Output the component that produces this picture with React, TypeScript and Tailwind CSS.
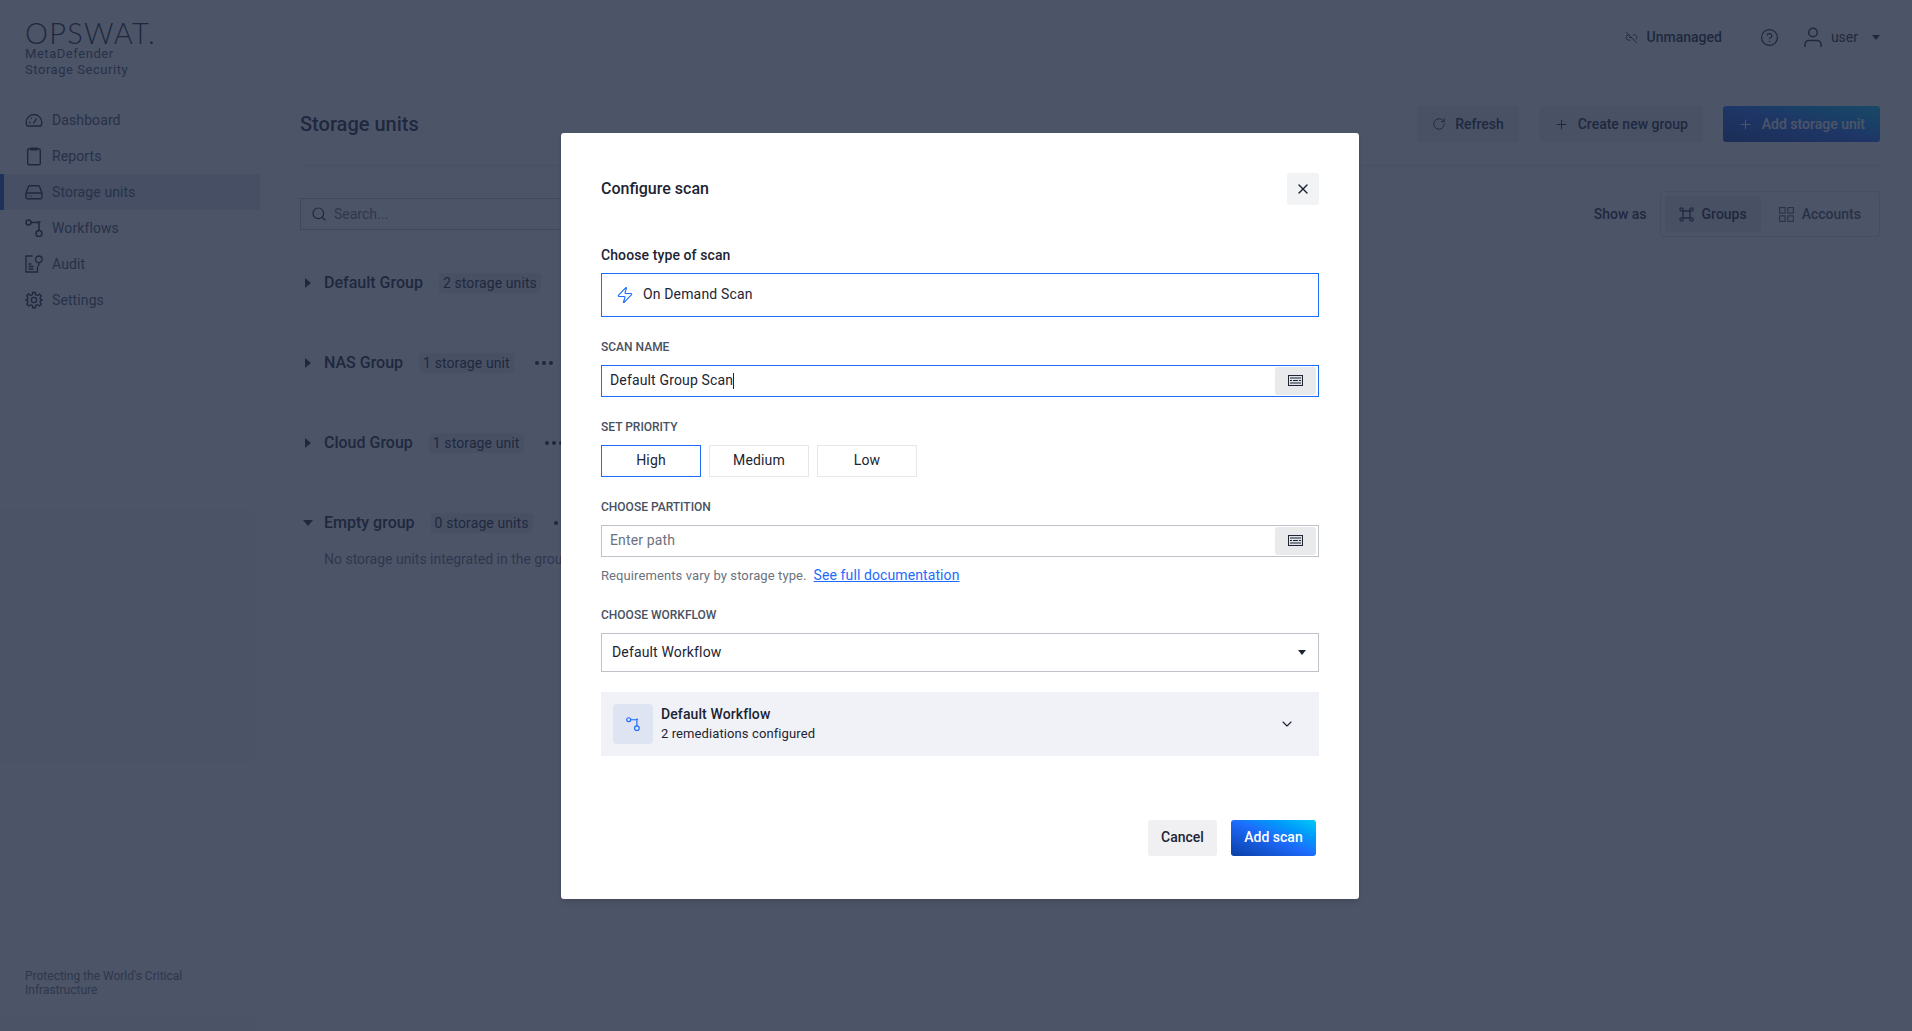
import { ChevronDown, CircleHelp, Link2Off, Plus, RotateCw, Search, X, Zap } from "lucide-react";

const navItems = [
  { label: "Dashboard", icon: <DashIcon /> },
  { label: "Reports", icon: <ReportIcon /> },
  { label: "Storage units", icon: <StorageIcon />, active: true },
  { label: "Workflows", icon: <WorkflowIcon size={18} /> },
  { label: "Audit", icon: <AuditIcon /> },
  { label: "Settings", icon: <GearIcon /> },
];

const groups = [
  { name: "Default Group", count: "2 storage units" },
  { name: "NAS Group", count: "1 storage unit" },
  { name: "Cloud Group", count: "1 storage unit" },
  { name: "Empty group", count: "0 storage units", open: true },
];

function DashIcon() {
  return (
    <svg width="18" height="18" viewBox="0 0 18 18" fill="none" stroke="currentColor" strokeWidth="1.4">
      <path d="M2.2 15h13.6c.6-1 1-2.4 1-3.6C16.800 7.200 13.300 3.500 9 3.500S1.200 7.200 1.200 11.400c0 1.200.4 2.600 1 3.600Z" />
      <path d="M8.500 12.500 11.500 7.500M4 11.500h1.500M6 7l.8.8" />
    </svg>
  );
}

function ReportIcon() {
  return (
    <svg width="18" height="20" viewBox="0 0 18 20" fill="none" stroke="currentColor" strokeWidth="1.4">
      <rect x="2.700" y="2.700" width="12.600" height="16" rx="1.500" />
      <path d="M6 2.200h6V3.800H6z" fill="currentColor" />
    </svg>
  );
}

function StorageIcon() {
  return (
    <svg width="18" height="18" viewBox="0 0 18 18" fill="none" stroke="currentColor" strokeWidth="1.4">
      <path d="M1 10 3.500 3.500c.2-.5.6-.8 1.200-.8h8.600c.6 0 1 .3 1.200.8L17 10v4.300c0 .8-.6 1.400-1.400 1.400H2.400c-.8 0-1.400-.6-1.400-1.400V10Z" />
      <path d="M1 10h16M3.800 13h.6M6 13h.6" />
    </svg>
  );
}

function WorkflowIcon({ size }: { size: number }) {
  return (
    <svg width={size} height={size} viewBox="0 0 18 18" fill="none" stroke="currentColor" strokeWidth="1.5">
      <circle cx="3.500" cy="3.500" r="2.500" />
      <circle cx="14" cy="14.500" r="3" />
      <path d="M6 3.500h8v8" />
      <path d="M12.500 3h3" />
    </svg>
  );
}

function AuditIcon() {
  return (
    <svg width="18" height="18" viewBox="0 0 18 18" fill="none" stroke="currentColor" strokeWidth="1.3">
      <path d="M7.500 1H1v16h11.500v-6" />
      <circle cx="13.800" cy="4.300" r="3.300" />
      <path d="M13.800 7.600V11M3.500 9h3M3.500 11.500h5M3.500 14h5" />
    </svg>
  );
}

function GearIcon() {
  return (
    <svg width="18" height="18" viewBox="0 0 24 24" fill="none" stroke="currentColor" strokeWidth="1.8">
      <path d="M10.300 2h3.400l.6 3 2.400 1 2.600-1.700 2.400 2.400L20 9.300l1 2.400 3 .3v0l-3 .6-1 2.400 1.700 2.600-2.400 2.400-2.600-1.700-2.400 1-.6 3h-3.400l-.6-3-2.400-1-2.600 1.700-2.400-2.400L4 14.700l-1-2.400-3-.3 3-.6 1-2.400-1.700-2.600 2.400-2.400L7.300 6l2.400-1 .6-3Z" />
      <circle cx="12" cy="12" r="3.500" />
    </svg>
  );
}

function KeyboardIcon() {
  return (
    <svg width="15" height="11" viewBox="0 0 15 11" fill="none">
      <rect x="0.500" y="0.500" width="14" height="10" stroke="#1d2433" fill="#dfe1e6" />
      <path d="M2 3h11M2 5.500h2M5 5.500h5M11 5.500h2M2 8h11" stroke="#1d2433" />
    </svg>
  );
}

function Caret() {
  return <span className="w-0 h-0 border-x-[4px] border-x-transparent border-t-[5px] border-t-[#1d2433]" />;
}

function FieldLabel({ children, className }: { children: React.ReactNode; className: string }) {
  return <p className={`text-[12px] leading-[14px] font-medium text-[#485162] ${className}`}>{children}</p>;
}

function TextField({ value, placeholder, focused }: { value?: string; placeholder?: string; focused?: boolean }) {
  return (
    <div className={`h-[32px] flex items-center justify-between border pl-[8px] pr-[2px] ${focused ? "border-[#1d6bfc]" : "border-[#bfc2c8]"}`}>
      {value ? (
        <span className="text-[14px] tracking-[0.15px] text-[#1d2433] flex items-center">
          {value}
          <span className="w-px h-[16px] bg-[#1d2433]" />
        </span>
      ) : (
        <span className="text-[14px] tracking-[0.15px] text-[#6b7280]">{placeholder}</span>
      )}
      <button className="w-[41px] h-[28px] rounded-[3px] bg-[#e9eaec] flex items-center justify-center">
        <KeyboardIcon />
      </button>
    </div>
  );
}

function PriorityButton({ label, active }: { label: string; active?: boolean }) {
  return (
    <button className={`w-[100px] h-[32px] text-[14px] tracking-[0.15px] text-[#1d2433] border ${active ? "border-[#1d6bfc]" : "border-[#e6e7ea]"}`}>
      {label}
    </button>
  );
}

function ActionButton({ icon, label, primary }: { icon: React.ReactNode; label: string; primary?: boolean }) {
  return (
    <button
      className={`h-[36px] px-[15px] rounded-[3px] flex items-center gap-[9px] text-[14px] font-medium ${
        primary
          ? "bg-gradient-to-tr from-[#0a3fa5] via-[#1d6bfc] to-[#00c8f5] text-white"
          : "bg-[#eef0f4] text-[#1d2433]"
      }`}
    >
      {icon}
      {label}
    </button>
  );
}

export default function App() {
  return (
    <div className="relative h-screen w-full flex overflow-hidden bg-white font-['Roboto',sans-serif] text-[#1d2433]">
      <aside className="w-[260px] shrink-0 flex flex-col bg-[#fcfcfc]">
        <div className="pl-[25px] pt-[17px]">
          <div className="font-['Lato',sans-serif] font-light text-[29px] leading-[32px] tracking-[1.3px] text-[#1d2433]">OPSWAT.</div>
          <div className="mt-[-3px] text-[13px] leading-[16px] tracking-[0.55px] text-[#485162]">
            MetaDefender
            <br />
            Storage Security
          </div>
        </div>
        <nav className="mt-[24px] flex flex-col">
          {navItems.map((item) => (
            <div
              key={item.label}
              className={`h-[36px] flex items-center gap-[9px] text-[14px] tracking-[0.1px] ${
                item.active ? "bg-[#dfe6ef] border-l-[4px] border-[#1d4fb5] pl-[21px]" : "pl-[25px]"
              }`}
            >
              <span className="w-[18px] flex justify-center text-[#1d2433]">{item.icon}</span>
              <span className="text-[#485162]">{item.label}</span>
            </div>
          ))}
        </nav>
        <p className="mt-auto mb-[34px] pl-[25px] text-[12px] leading-[14px] text-[#6b7280]">
          Protecting the World's Critical
          <br />
          Infrastructure
        </p>
      </aside>

      <main className="flex-1 pl-[40px] pr-[32px] flex flex-col">
        <div className="h-[74px] flex items-center justify-end text-[14px] font-medium">
          <Link2Off size={13} strokeWidth={1.6} />
          <span className="ml-[9px] text-[#1d2433]">Unmanaged</span>
          <CircleHelp size={19} strokeWidth={1.6} className="ml-[38px]" />
          <svg className="ml-[25px]" width="18" height="21" viewBox="0 0 18 21" fill="none" stroke="currentColor" strokeWidth="1.5">
            <circle cx="9" cy="5.500" r="4.300" />
            <path d="M1 20v-2.500C1 15 3 13.500 5 13.500h8c2 0 4 1.500 4 4V20" />
          </svg>
          <span className="ml-[9px] font-normal mr-[14px]">user</span>
          <Caret />
        </div>

        <div className="pt-[32px] pb-[23px] flex items-center justify-between border-b border-[#e8eaee]">
          <h1 className="text-[20px] font-medium">Storage units</h1>
          <div className="flex gap-[20px]">
            <ActionButton icon={<RotateCw size={14} strokeWidth={1.6} />} label="Refresh" />
            <ActionButton icon={<Plus size={15} strokeWidth={1.6} />} label="Create new group" />
            <ActionButton primary icon={<Plus size={15} strokeWidth={1.6} />} label="Add storage unit" />
          </div>
        </div>

        <div className="mt-[25px] h-[46px] flex items-center justify-between">
          <div className="w-[400px] h-[32px] flex items-center gap-[7px] border border-[#bfc2c8] pl-[10px] text-[14px] text-[#6b7280]">
            <Search size={16} strokeWidth={1.8} className="text-[#1d2433]" />
            Search...
          </div>
          <div className="flex items-center gap-[13px]">
            <span className="text-[14px] font-medium">Show as</span>
            <div className="h-[46px] flex items-center p-[4px] rounded-[3px] border border-[#dfe1e6] text-[14px] font-medium">
              <div className="h-[36px] px-[14px] flex items-center gap-[8px] rounded-[3px] bg-[#e9ecf1]">
                <svg width="15" height="15" viewBox="0 0 15 15" fill="none" stroke="currentColor" strokeWidth="1.3">
                  <circle cx="2.500" cy="2.500" r="1.600" />
                  <circle cx="12.500" cy="2.500" r="1.600" />
                  <circle cx="2.500" cy="12.500" r="1.600" />
                  <circle cx="12.500" cy="12.500" r="1.600" />
                  <rect x="4" y="4" width="7" height="7" rx="1" />
                </svg>
                Groups
              </div>
              <div className="h-[36px] pl-[18px] pr-[14px] flex items-center gap-[8px] text-[#485162]">
                <svg width="15" height="15" viewBox="0 0 15 15" fill="none" stroke="currentColor" strokeWidth="1.1">
                  <rect x="0.600" y="0.600" width="5.500" height="5.500" />
                  <rect x="8.900" y="0.600" width="5.500" height="5.500" />
                  <rect x="0.600" y="8.900" width="5.500" height="5.500" />
                  <rect x="8.900" y="8.900" width="5.500" height="5.500" />
                </svg>
                Accounts
              </div>
            </div>
          </div>
        </div>

        <div className="mt-[26px] flex flex-col gap-[40px]">
          {groups.map((group) => (
            <div key={group.name} className="h-[40px] relative">
              <div className="h-[40px] flex items-center">
                <span className="w-[24px] flex">
                  {group.open ? (
                    <span className="ml-[3px] w-0 h-0 border-x-[5px] border-x-transparent border-t-[6px] border-t-[#1d2433]" />
                  ) : (
                    <span className="ml-[5px] w-0 h-0 border-y-[5px] border-y-transparent border-l-[6px] border-l-[#1d2433]" />
                  )}
                </span>
                <span className="text-[16px] font-medium">{group.name}</span>
                <span className="ml-[16px] h-[20px] px-[4px] rounded-[3px] bg-[#e9ecf1] text-[14px] leading-[20px] tracking-[0.1px]">{group.count}</span>
                <span className="ml-[21px] text-[18px] font-bold tracking-[1px] flex gap-[3px]">
                  <span className="w-[4px] h-[4px] rounded-full bg-[#1d2433]" />
                  <span className="w-[4px] h-[4px] rounded-full bg-[#1d2433]" />
                  <span className="w-[4px] h-[4px] rounded-full bg-[#1d2433]" />
                </span>
              </div>
              {group.open && (
                <p className="mt-[6px] ml-[24px] text-[14px] leading-[20px] text-[#6b7280]">No storage units integrated in the group</p>
              )}
            </div>
          ))}
        </div>
      </main>

      {/* dialog layer */}
      <div className="absolute inset-0 bg-[#1f2941]/80 flex items-center justify-center pl-[8px]">
        <div className="w-[798px] h-[766px] bg-white rounded-[3px] shadow-md px-[40px] pt-[40px] flex flex-col">
          <div className="flex items-center justify-between">
            <h2 className="text-[16px] font-medium">Configure scan</h2>
            <button className="w-[32px] h-[32px] rounded-[3px] bg-[#f2f3f5] flex items-center justify-center">
              <X size={16} strokeWidth={2} />
            </button>
          </div>

          <p className="mt-[42px] text-[14px] leading-[16px] font-medium tracking-[0.1px]">Choose type of scan</p>
          <div className="mt-[10px] h-[44px] flex items-center border border-[#1d6bfc] pl-[14px] gap-[9px] text-[14px] tracking-[0.15px]">
            <Zap size={18} strokeWidth={1.5} className="text-[#1d6bfc]" />
            On Demand Scan
          </div>

          <FieldLabel className="mt-[23px] mb-[11px]">SCAN NAME</FieldLabel>
          <TextField value="Default Group Scan" focused />

          <FieldLabel className="mt-[23px] mb-[11px]">SET PRIORITY</FieldLabel>
          <div className="flex gap-[8px]">
            <PriorityButton label="High" active />
            <PriorityButton label="Medium" />
            <PriorityButton label="Low" />
          </div>

          <FieldLabel className="mt-[23px] mb-[11px]">CHOOSE PARTITION</FieldLabel>
          <TextField placeholder="Enter path" />
          <p className="mt-[9px] text-[13px] leading-[18px] tracking-[0.1px] text-[#6b7280]">
            Requirements vary by storage type.
            <a className="ml-[7px] text-[14px] text-[#1d6bfc] underline">See full documentation</a>
          </p>

          <FieldLabel className="mt-[23px] mb-[11px]">CHOOSE WORKFLOW</FieldLabel>
          <div className="h-[39px] flex items-center justify-between border border-[#bfc2c8] pl-[10px] pr-[12px] text-[14px] tracking-[0.15px]">
            Default Workflow
            <Caret />
          </div>

          <div className="mt-[20px] h-[64px] flex items-center bg-[#f1f2f7] pl-[12px] pr-[24px]">
            <div className="w-[40px] h-[40px] rounded-[4px] bg-[#dfe4f3] flex items-center justify-center text-[#1d6bfc]">
              <WorkflowIcon size={14} />
            </div>
            <div className="ml-[8px] flex-1">
              <p className="text-[14px] leading-[19px] font-medium tracking-[0.1px]">Default Workflow</p>
              <p className="text-[13px] leading-[19px] tracking-[0.1px]">2 remediations configured</p>
            </div>
            <ChevronDown size={16} strokeWidth={1.7} />
          </div>

          <div className="mt-[64px] pr-[3px] flex justify-end gap-[14px] text-[14px] font-medium">
            <button className="w-[69px] h-[36px] rounded-[3px] bg-[#f0f0f3]">Cancel</button>
            <button className="w-[85px] h-[36px] rounded-[3px] bg-gradient-to-tr from-[#0a3fa5] via-[#1d6bfc] to-[#00c8f5] text-white">Add scan</button>
          </div>
        </div>
      </div>
    </div>
  );
}
